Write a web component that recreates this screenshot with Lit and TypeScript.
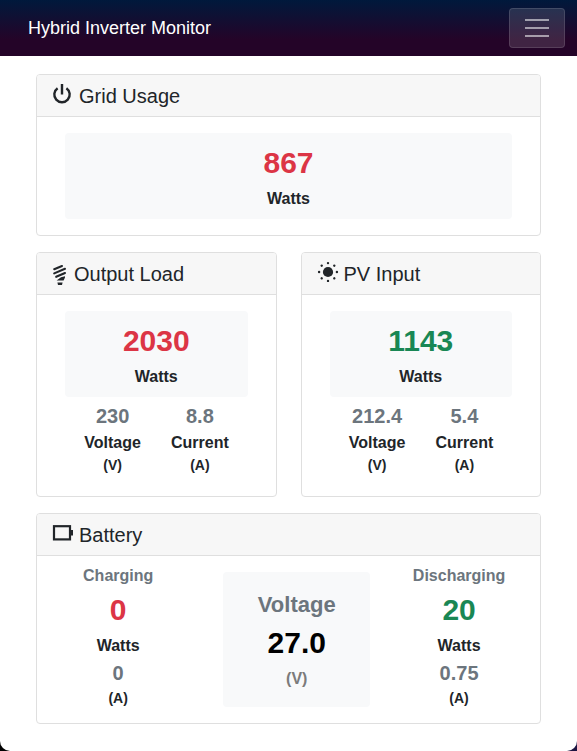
import { LitElement, html, css, svg, nothing, type TemplateResult } from "lit";
import { customElement, property } from "lit/decorators.js";

const icons: Record<string, TemplateResult> = {
  power: html`<svg width="20" height="20" viewBox="0 0 20 20" aria-hidden="true">
    <path d="M9 0V10.4M4.6 4.2A7.7 7.7 0 1 0 13.4 4.2" fill="none" stroke="currentColor" stroke-width="2.4"/>
  </svg>`,
  bulb: html`<svg width="15" height="20" viewBox="0 0 15 20" aria-hidden="true">
    <path d="M1.2 7.2L9 4M1.2 11.4L12 6.8M3.2 14.8L12 11" fill="none" stroke="currentColor" stroke-width="2.1" stroke-linecap="round"/>
    <path d="M3.6 18.4L8 15.2L12 14.2V15.4L10.6 18.4ZM4.4 20.6H9.6L9 23H5Z" fill="currentColor"/>
  </svg>`,
  sun: html`<svg width="20" height="20" viewBox="0 0 20 20" aria-hidden="true" fill="currentColor">
    <circle cx="10" cy="10" r="5.1"/>
    ${[0, 45, 90, 135, 180, 225, 270, 315].map(
      (a) => svg`<circle cx="10" cy="1.1" r="1.2" transform="rotate(${a} 10 10)"/>`
    )}
  </svg>`,
  battery: html`<svg width="20" height="20" viewBox="0 0 20 20" aria-hidden="true">
    <rect x="1" y="3.2" width="16" height="13.2" fill="none" stroke="currentColor" stroke-width="2.2"/>
    <rect x="17" y="7" width="3" height="5.5" fill="currentColor"/>
  </svg>`,
};

@customElement("monitor-card")
class MonitorCard extends LitElement {
  @property() heading = "";
  @property() icon = "";

  static styles = css`
    :host {
      display: block;
      background: #fff;
      border: 1px solid #dfdfdf;
      border-radius: 4px;
    }
    .head {
      display: flex;
      align-items: center;
      gap: 6px;
      margin: 0;
      height: 41px;
      padding: 0 16px;
      background: #f7f7f7;
      border-bottom: 1px solid #dfdfdf;
      border-radius: 3px 3px 0 0;
      font-size: 20px;
      line-height: 24px;
      font-weight: 400;
    }
    svg {
      display: block;
      flex: none;
      margin-bottom: 4px;
      overflow: visible;
    }
  `;

  render() {
    return html`
      <h2 class="head">${icons[this.icon] ?? nothing}<span>${this.heading}</span></h2>
      <slot></slot>
    `;
  }
}

@customElement("app-root")
class AppRoot extends LitElement {
  static styles = css`
    :host {
      display: block;
      background: linear-gradient(90deg, #000, #1c1442);
      color: #212529;
      font-family: "Liberation Sans", Arial, sans-serif;
      font-size: 16px;
      line-height: 24px;
    }
    .page {
      min-height: 100vh;
      box-sizing: border-box;
      background: #fff;
      border-radius: 0 0 10px 10px;
    }
    .bar {
      display: flex;
      align-items: center;
      justify-content: space-between;
      padding: 8px 12px 8px 28px;
      background: linear-gradient(#00193c, #240428 70%);
    }
    .brand {
      color: #fff;
      font-size: 18px;
      text-decoration: none;
    }
    .toggle {
      display: flex;
      flex-direction: column;
      align-items: center;
      justify-content: center;
      gap: 6px;
      width: 56px;
      height: 40px;
      padding: 0;
      background: rgba(255, 255, 255, 0.13);
      border: 1px solid rgba(255, 255, 255, 0.12);
      border-radius: 4px;
    }
    .line {
      width: 24px;
      height: 2px;
      background: rgba(255, 255, 255, 0.55);
    }
    .cards {
      display: grid;
      grid-template-columns: 1fr 1fr;
      gap: 16px 24px;
      padding: 18px 36px 27px;
    }
    .wide {
      grid-column: 1 / -1;
    }
    .body {
      padding: 16px 28px;
    }
    .panel {
      padding: 12px 0 8px;
      background: #f8f9fa;
      border-radius: 4px;
      text-align: center;
    }
    .big,
    .unit,
    .mid,
    .small,
    .title {
      margin: 0;
      font-weight: 700;
    }
    .big {
      font-size: 30px;
      line-height: 36px;
      margin-bottom: 6px;
    }
    .mid {
      font-size: 20px;
      line-height: 26px;
      margin-bottom: 2px;
    }
    .small {
      font-size: 14px;
      line-height: 20px;
    }
    .title {
      font-size: 22px;
      line-height: 28px;
      margin-bottom: 6px;
    }
    .red {
      color: #dc3545;
    }
    .green {
      color: #198754;
    }
    .grey {
      color: #6c757d;
    }
    .dim {
      color: #7b7b7b;
    }
    .black {
      color: #000;
    }
    .pair {
      display: grid;
      grid-template-columns: 1fr 1fr;
      padding: 6px 4px 5px;
      text-align: center;
    }
    .battery {
      display: grid;
      grid-template-columns: 5fr 6fr 4fr;
      padding: 8px 16px 12px 0;
      text-align: center;
    }
    .flow .unit {
      margin-bottom: 2px;
    }
    .flow .grey.unit {
      margin-bottom: 4px;
    }
    .volts {
      margin: 8px 24px 4px;
      padding: 19px 0 16px;
    }
  `;

  private pair(volts: string, amps: string) {
    return html`<div class="pair">
      <div>
        <p class="mid grey">${volts}</p>
        <p class="unit">Voltage</p>
        <p class="small">(V)</p>
      </div>
      <div>
        <p class="mid grey">${amps}</p>
        <p class="unit">Current</p>
        <p class="small">(A)</p>
      </div>
    </div>`;
  }

  private panel(value: string, tone: string) {
    return html`<div class="panel">
      <p class="big ${tone}">${value}</p>
      <p class="unit">Watts</p>
    </div>`;
  }

  private flow(name: string, watts: string, tone: string, amps: string) {
    return html`<div class="flow">
      <p class="unit grey">${name}</p>
      <p class="big ${tone}">${watts}</p>
      <p class="unit">Watts</p>
      <p class="mid grey">${amps}</p>
      <p class="small">(A)</p>
    </div>`;
  }

  render() {
    return html`<div class="page">
      <nav class="bar">
        <a class="brand" href="#">Hybrid Inverter Monitor</a>
        <button class="toggle" type="button" aria-label="Toggle navigation">
          <span class="line"></span><span class="line"></span><span class="line"></span>
        </button>
      </nav>
      <main class="cards">
        <monitor-card class="wide" heading="Grid Usage" icon="power">
          <div class="body">${this.panel("867", "red")}</div>
        </monitor-card>
        <monitor-card heading="Output Load" icon="bulb">
          <div class="body">${this.panel("2030", "red")}${this.pair("230", "8.8")}</div>
        </monitor-card>
        <monitor-card heading="PV Input" icon="sun">
          <div class="body">${this.panel("1143", "green")}${this.pair("212.4", "5.4")}</div>
        </monitor-card>
        <monitor-card class="wide" heading="Battery" icon="battery">
          <div class="battery">
            ${this.flow("Charging", "0", "red", "0")}
            <div class="panel volts">
              <p class="title grey">Voltage</p>
              <p class="big black">27.0</p>
              <p class="unit dim">(V)</p>
            </div>
            ${this.flow("Discharging", "20", "green", "0.75")}
          </div>
        </monitor-card>
      </main>
    </div>`;
  }
}
